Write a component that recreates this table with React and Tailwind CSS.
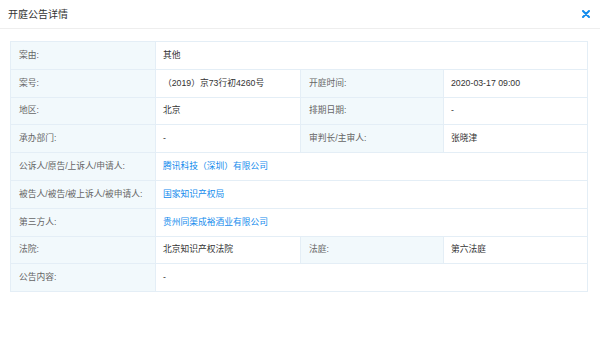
import React from "react";

const L = "bg-[#f2f9fc] text-[#666] pl-[8px] flex items-center border-r border-b border-[#e4eef6] h-[27.8px]";
const V = "text-[#333] pl-[7px] flex items-center border-r border-b border-[#e4eef6] h-[27.8px]";
const A = "text-[#128bed] pl-[7px] flex items-center border-r border-b border-[#e4eef6] h-[27.8px]";

export default function App() {
  return (
    <div
      className="w-[600px] h-[342px] bg-white"
      style={{ fontFamily: '"Liberation Sans", "Noto Sans CJK SC", sans-serif' }}
    >
      <div className="h-[29px] flex items-center justify-between pl-[8px] pr-[10px] border-b border-[#eeeeee]">
        <span className="text-[10px] text-[#333]">开庭公告详情</span>
        <svg width="8" height="8" viewBox="0 0 8 8">
          <path d="M1 1L7 7M7 1L1 7" stroke="#128bed" strokeWidth="2" strokeLinecap="round" />
        </svg>
      </div>
      <div className="pl-[10px] pr-[12px] pt-[12px]">
        <div className="grid grid-cols-[145px_145px_143px_1fr] border-t border-l border-[#e4eef6] text-[8.75px]">
          <div className={L}>案由:</div>
          <div className={V + " col-span-3"}>其他</div>

          <div className={L}>案号:</div>
          <div className={V}>（2019）京73行初4260号</div>
          <div className={L}>开庭时间:</div>
          <div className={V}>2020-03-17 09:00</div>

          <div className={L}>地区:</div>
          <div className={V}>北京</div>
          <div className={L}>排期日期:</div>
          <div className={V}>-</div>

          <div className={L}>承办部门:</div>
          <div className={V}>-</div>
          <div className={L}>审判长/主审人:</div>
          <div className={V}>张晓津</div>

          <div className={L}>公诉人/原告/上诉人/申请人:</div>
          <div className={A + " col-span-3"}>腾讯科技（深圳）有限公司</div>

          <div className={L}>被告人/被告/被上诉人/被申请人:</div>
          <div className={A + " col-span-3"}>国家知识产权局</div>

          <div className={L}>第三方人:</div>
          <div className={A + " col-span-3"}>贵州同渠成裕酒业有限公司</div>

          <div className={L}>法院:</div>
          <div className={V}>北京知识产权法院</div>
          <div className={L}>法庭:</div>
          <div className={V}>第六法庭</div>

          <div className={L}>公告内容:</div>
          <div className={V + " col-span-3"}>-</div>
        </div>
      </div>
    </div>
  );
}
